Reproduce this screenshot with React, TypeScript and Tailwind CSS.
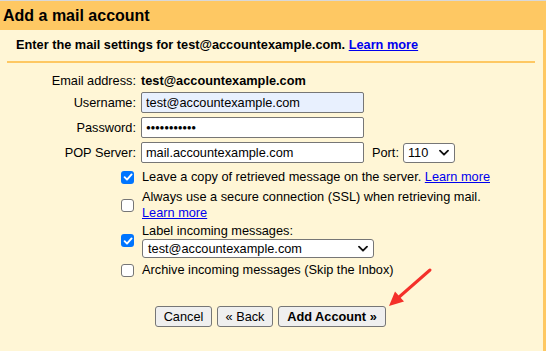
import React from "react";

const font = { fontFamily: '"Liberation Sans", Arial, Helvetica, sans-serif' };

function Check({ checked }: { checked?: boolean }) {
  return checked ? (
    <span className="flex h-[13px] w-[13px] shrink-0 items-center justify-center rounded-[3px] bg-[#0075ff]">
      <svg width="10" height="10" viewBox="0 0 10 10">
        <path d="M1.6 5.2 L4 7.6 L8.6 2.4" fill="none" stroke="white" strokeWidth="1.9" strokeLinecap="round" strokeLinejoin="round" />
      </svg>
    </span>
  ) : (
    <span className="h-[13px] w-[13px] shrink-0 rounded-[3px] border border-[#767676] bg-white" />
  );
}

function Chevron() {
  return (
    <svg width="10" height="7" viewBox="0 0 10 7" className="absolute right-[5px] top-1/2 -translate-y-1/2">
      <path d="M1 1.2 L5 5.2 L9 1.2" fill="none" stroke="#111" strokeWidth="1.8" strokeLinecap="round" strokeLinejoin="round" />
    </svg>
  );
}

function Link({ children }: { children: React.ReactNode }) {
  return <a className="cursor-pointer text-[#0000ee] underline">{children}</a>;
}

export default function App() {
  return (
    <div className="relative h-[351px] w-[546px] overflow-hidden bg-[#fff6d6] text-[12.75px] leading-[16px] text-black" style={font}>
      <div className="border-t border-[#d8d8d8]" />
      <div className="flex h-[351px]">
        <div className="flex flex-1 flex-col">
          <div className="flex h-[29px] items-center bg-[#fec863] pl-[3px] text-[16px] font-bold">Add a mail account</div>
          <div className="pl-[16px] pt-[7px] font-bold">
            Enter the mail settings for test@accountexample.com. <Link>Learn more</Link>
          </div>
          <div className="ml-[7px] mr-[8px] mt-[8px] h-[2px] bg-[#fec863]" />

          <div className="mt-[10px] grid grid-cols-[136px_1fr] items-center gap-x-[5px]">
            <div className="text-right">Email address:</div>
            <div className="font-bold">test@accountexample.com</div>

            <div className="mt-[3px] text-right">Username:</div>
            <input
              readOnly
              value="test@accountexample.com"
              className="mt-[3px] h-[21px] w-[223px] rounded-[2px] border border-[#767676] bg-[#e8f0fe] px-[4px] text-[12.75px] outline-none"
              style={font}
            />

            <div className="mt-[4px] text-right">Password:</div>
            <div className="mt-[4px] flex h-[21px] w-[223px] items-center rounded-[2px] border border-[#767676] bg-white px-[4px] text-[8px] tracking-[-0.3px]">
              ●●●●●●●●●●●
            </div>

            <div className="mt-[4px] text-right">POP Server:</div>
            <div className="mt-[4px] flex items-center">
              <input
                readOnly
                value="mail.accountexample.com"
                className="h-[21px] w-[223px] rounded-[2px] border border-[#767676] bg-white px-[4px] text-[12.75px] outline-none"
                style={font}
              />
              <span className="ml-[8px]">Port:</span>
              <div className="relative ml-[4px] flex h-[20px] w-[52px] items-center rounded-[3px] border border-[#767676] bg-white pl-[4px]">
                110
                <Chevron />
              </div>
            </div>
          </div>

          <div className="ml-[121px] mt-[6px] flex flex-col">
            <div className="flex items-center gap-[8px]">
              <Check checked />
              <span>
                Leave a copy of retrieved message on the server. <Link>Learn more</Link>
              </span>
            </div>
            <div className="mt-[4px] flex items-center gap-[8px]">
              <Check />
              <div className="flex flex-col">
                <span>Always use a secure connection (SSL) when retrieving mail.</span>
                <span>
                  <Link>Learn more</Link>
                </span>
              </div>
            </div>
            <div className="mt-[2px] flex items-center gap-[8px]">
              <Check checked />
              <div className="flex flex-col">
                <span>Label incoming messages:</span>
                <div className="relative flex h-[19px] w-[232px] items-center rounded-[3px] border border-[#767676] bg-white pl-[5px]">
                  test@accountexample.com
                  <Chevron />
                </div>
              </div>
            </div>
            <div className="mt-[4px] flex items-center gap-[8px]">
              <Check />
              <span>Archive incoming messages (Skip the Inbox)</span>
            </div>
          </div>

          <div className="ml-[155px] mt-[28px] flex gap-[5px]">
            <button className="h-[21px] w-[57px] rounded-[3px] border border-[#767676] bg-[#efefef] text-[12.75px]" style={font}>
              Cancel
            </button>
            <button className="h-[21px] w-[56px] rounded-[3px] border border-[#767676] bg-[#efefef] text-[12.75px]" style={font}>
              « Back
            </button>
            <button className="h-[21px] w-[108px] rounded-[3px] border border-[#767676] bg-[#efefef] text-[12.75px] font-bold" style={font}>
              Add Account »
            </button>
          </div>
        </div>
        <div className="w-[3px] bg-[#fec863]" />
      </div>

      <svg className="pointer-events-none absolute left-0 top-0" width="546" height="351">
        <line x1="430" y1="270" x2="398" y2="298" stroke="#f4302a" strokeWidth="3" strokeLinecap="round" />
        <polygon points="389,306 404,301.5 395,291.5" fill="#f4302a" />
      </svg>
    </div>
  );
}
